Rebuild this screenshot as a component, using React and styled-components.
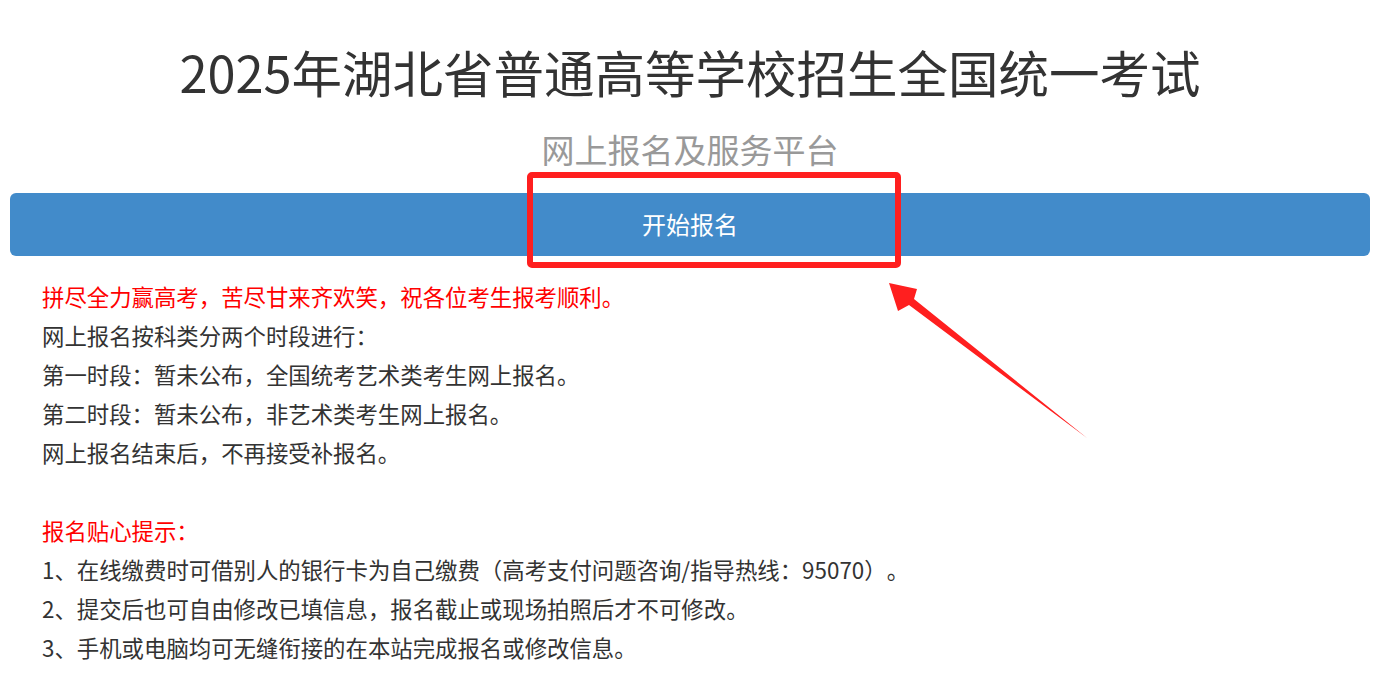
import React from "react";
import styled, { createGlobalStyle } from "styled-components";

const Global = createGlobalStyle`
  html, body { margin: 0; padding: 0; background: #fff; }
  body {
    font-family: "Noto Sans CJK SC", "Noto Sans", sans-serif;
    text-spacing-trim: space-all;
  }
`;

const Page = styled.div`
  position: relative;
  width: 1380px;
  height: 678px;
  overflow: hidden;
  padding: 0 10px;
  box-sizing: border-box;
  display: flex;
  flex-direction: column;
`;

const Title = styled.h1`
  margin: 41px 0 0;
  font-size: 50.5px;
  line-height: 60px;
  font-weight: 400;
  color: #333;
  text-align: center;
`;

const Subtitle = styled.h2`
  margin: 28px 0 0;
  font-size: 33px;
  line-height: 40px;
  font-weight: 400;
  color: #999;
  text-align: center;
`;

const ButtonWrap = styled.div`
  position: relative;
  margin-top: 24px;
`;

const StartButton = styled.button`
  display: flex;
  align-items: center;
  justify-content: center;
  width: 100%;
  height: 63px;
  border: none;
  border-radius: 6px;
  background: #428bca;
  color: #fff;
  font-family: "Noto Sans CJK SC", sans-serif;
  font-size: 24px;
  cursor: pointer;
  padding: 0 0 2px;
`;

const Highlight = styled.div`
  position: absolute;
  left: 517px;
  top: -21px;
  width: 374px;
  height: 96px;
  box-sizing: border-box;
  border: 6px solid #ff1f1f;
  border-radius: 5px;
  pointer-events: none;
`;

const Arrow = styled.svg`
  position: absolute;
  left: 0;
  top: 0;
  pointer-events: none;
`;

const Notice = styled.div`
  margin: 21px 0 0 32px;
  font-size: 22.4px;
  line-height: 39px;
  color: #333;
`;

const Line = styled.p`
  margin: 0;
  white-space: nowrap;
  color: ${(p) => (p.$red ? "#ff0000" : "#333")};
`;

const Punct = styled.span`
  display: inline-block;
  width: 1em;
  text-align: ${(p) => (p.$open ? "right" : "left")};
`;

const Spacer = styled.div`
  height: 39px;
`;

const PUNCT = "，。：、（）";

function fw(text) {
  const out = [];
  let buf = "";
  [...text].forEach((ch, i) => {
    if (PUNCT.includes(ch)) {
      if (buf) out.push(buf);
      buf = "";
      out.push(
        <Punct key={i} $open={ch === "（"}>
          {ch}
        </Punct>
      );
    } else {
      buf += ch;
    }
  });
  if (buf) out.push(buf);
  return out;
}

const lines = [
  { red: true, text: "拼尽全力赢高考，苦尽甘来齐欢笑，祝各位考生报考顺利。" },
  { text: "网上报名按科类分两个时段进行：" },
  { text: "第一时段：暂未公布，全国统考艺术类考生网上报名。" },
  { text: "第二时段：暂未公布，非艺术类考生网上报名。" },
  { text: "网上报名结束后，不再接受补报名。" },
  { gap: true },
  { red: true, text: "报名贴心提示：" },
  { text: "1、在线缴费时可借别人的银行卡为自己缴费（高考支付问题咨询/指导热线：95070）。" },
  { text: "2、提交后也可自由修改已填信息，报名截止或现场拍照后才不可修改。" },
  { text: "3、手机或电脑均可无缝衔接的在本站完成报名或修改信息。" },
];

export default function App() {
  return (
    <>
      <Global />
      <Page lang="zh-CN">
        <Title>2025年湖北省普通高等学校招生全国统一考试</Title>
        <Subtitle>网上报名及服务平台</Subtitle>
        <ButtonWrap>
          <StartButton>开始报名</StartButton>
          <Highlight />
        </ButtonWrap>
        <Notice>
          {lines.map((l, i) =>
            l.gap ? (
              <Spacer key={i} />
            ) : (
              <Line key={i} $red={l.red}>
                {fw(l.text)}
              </Line>
            )
          )}
        </Notice>
        <Arrow width="1380" height="678" viewBox="0 0 1380 678">
          <polygon
            points="889,283 917,289 914,299 1087,438 909,305 898,311"
            fill="#ff1f1f"
          />
        </Arrow>
      </Page>
    </>
  );
}
